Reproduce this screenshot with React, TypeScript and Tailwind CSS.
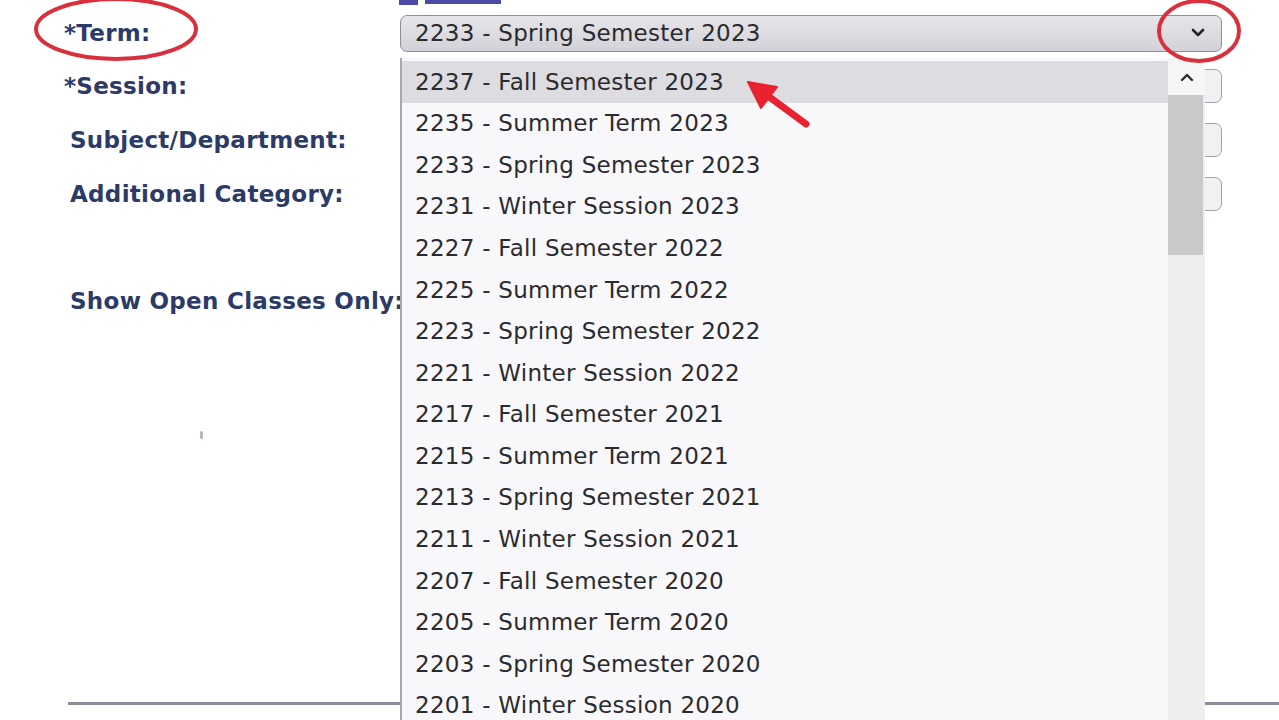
import React from "react";

const terms = [
  "2237 - Fall Semester 2023",
  "2235 - Summer Term 2023",
  "2233 - Spring Semester 2023",
  "2231 - Winter Session 2023",
  "2227 - Fall Semester 2022",
  "2225 - Summer Term 2022",
  "2223 - Spring Semester 2022",
  "2221 - Winter Session 2022",
  "2217 - Fall Semester 2021",
  "2215 - Summer Term 2021",
  "2213 - Spring Semester 2021",
  "2211 - Winter Session 2021",
  "2207 - Fall Semester 2020",
  "2205 - Summer Term 2020",
  "2203 - Spring Semester 2020",
  "2201 - Winter Session 2020",
];

function FieldRow({
  label,
  height,
  indent,
  children,
}: {
  label: string;
  height: string;
  indent: string;
  children?: React.ReactNode;
}) {
  return (
    <div className={`flex items-center ${height}`}>
      <div className={`w-[400px] shrink-0 whitespace-nowrap text-[23px] font-bold tracking-[0.3px] text-[#2c3a68] ${indent}`}>
        {label}
      </div>
      {children}
    </div>
  );
}

function EmptySelect() {
  return <div className="h-[34px] w-[822px] rounded-[7px] border border-[#a2a2aa] bg-[#f1f1f3]" />;
}

export default function App() {
  return (
    <div className="relative h-[720px] w-[1279px] overflow-hidden bg-white font-['DejaVu_Sans',Verdana,sans-serif]">
      {/* bottom edge of a link above the form */}
      <div className="flex h-[5px] gap-[7px] pl-[399px]">
        <div className="h-[5px] w-[19px] bg-[#4b4aa6]" />
        <div className="h-[4px] w-[76px] bg-[#4b4aa6]" />
      </div>

      <div className="flex flex-col">
        <FieldRow label="*Term:" height="h-[56px]" indent="pl-[64px]">
          <div className="flex h-[37px] w-[822px] items-center justify-between rounded-[7px] border border-[#8e8e96] bg-gradient-to-b from-[#e6e6ea] to-[#d2d2d8] pl-[14px] pr-[16px] text-[23px] tracking-[0.26px] text-[#2a2a2e]">
            <span>2233 - Spring Semester 2023</span>
            <svg width="14" height="10" viewBox="0 0 14 10">
              <polyline points="2,2 7,7 12,2" fill="none" stroke="#22242c" strokeWidth="2.6" strokeLinecap="round" strokeLinejoin="round" />
            </svg>
          </div>
        </FieldRow>
        <FieldRow label="*Session:" height="h-[50px]" indent="pl-[64px]">
          <EmptySelect />
        </FieldRow>
        <FieldRow label="Subject/Department:" height="h-[58px]" indent="pl-[70px]">
          <EmptySelect />
        </FieldRow>
        <FieldRow label="Additional Category:" height="h-[50px]" indent="pl-[70px]">
          <EmptySelect />
        </FieldRow>
        <div className="h-[57px]" />
        <FieldRow label="Show Open Classes Only:" height="h-[50px]" indent="pl-[70px]" />
        <div className="h-[376px]" />
        <div className="ml-[68px] h-[3px] bg-[#8d8d99]" />
      </div>

      {/* stray mark */}
      <div className="absolute left-[200px] top-[431px] h-[8px] w-[3px] rounded-full bg-[#b8b8c0]" />

      {/* open dropdown list */}
      <div className="absolute left-[400px] top-[58px] bottom-[-20px] flex w-[805px] border-l-2 border-[#a8a8b0] bg-[#f8f8fa]">
        <ul className="flex-1 pt-[3px] text-[23px] tracking-[0.26px] text-[#2b2b2f]">
          {terms.map((t, i) => (
            <li
              key={t}
              className={`flex h-[41.6px] items-center pl-[13px] ${i === 0 ? "bg-[#dcdce1]" : ""}`}
            >
              {t}
            </li>
          ))}
        </ul>
        <div className="flex w-[37px] flex-col bg-[#eeeeef]">
          <div className="flex h-[37px] items-center justify-center bg-[#f6f6f7]">
            <svg width="14" height="10" viewBox="0 0 14 10">
              <polyline points="2,8 7,3 12,8" fill="none" stroke="#2a2a30" strokeWidth="2.4" strokeLinecap="round" strokeLinejoin="round" />
            </svg>
          </div>
          <div className="mr-[2px] h-[160px] bg-[#c9c9cb]" />
        </div>
      </div>

      {/* red annotations */}
      <svg className="pointer-events-none absolute inset-0" width="1279" height="720" viewBox="0 0 1279 720">
        <ellipse cx="116" cy="29" rx="80" ry="30" fill="none" stroke="#d8303c" strokeWidth="4" />
        <ellipse cx="1199" cy="31" rx="40" ry="30" fill="none" stroke="#d8303c" strokeWidth="4" />
        <line x1="806" y1="124" x2="768" y2="96" stroke="#e8222e" strokeWidth="7" strokeLinecap="round" />
        <polygon points="748,82 777,87 761,108" fill="#e8222e" stroke="#e8222e" strokeWidth="2" strokeLinejoin="round" />
      </svg>
    </div>
  );
}
